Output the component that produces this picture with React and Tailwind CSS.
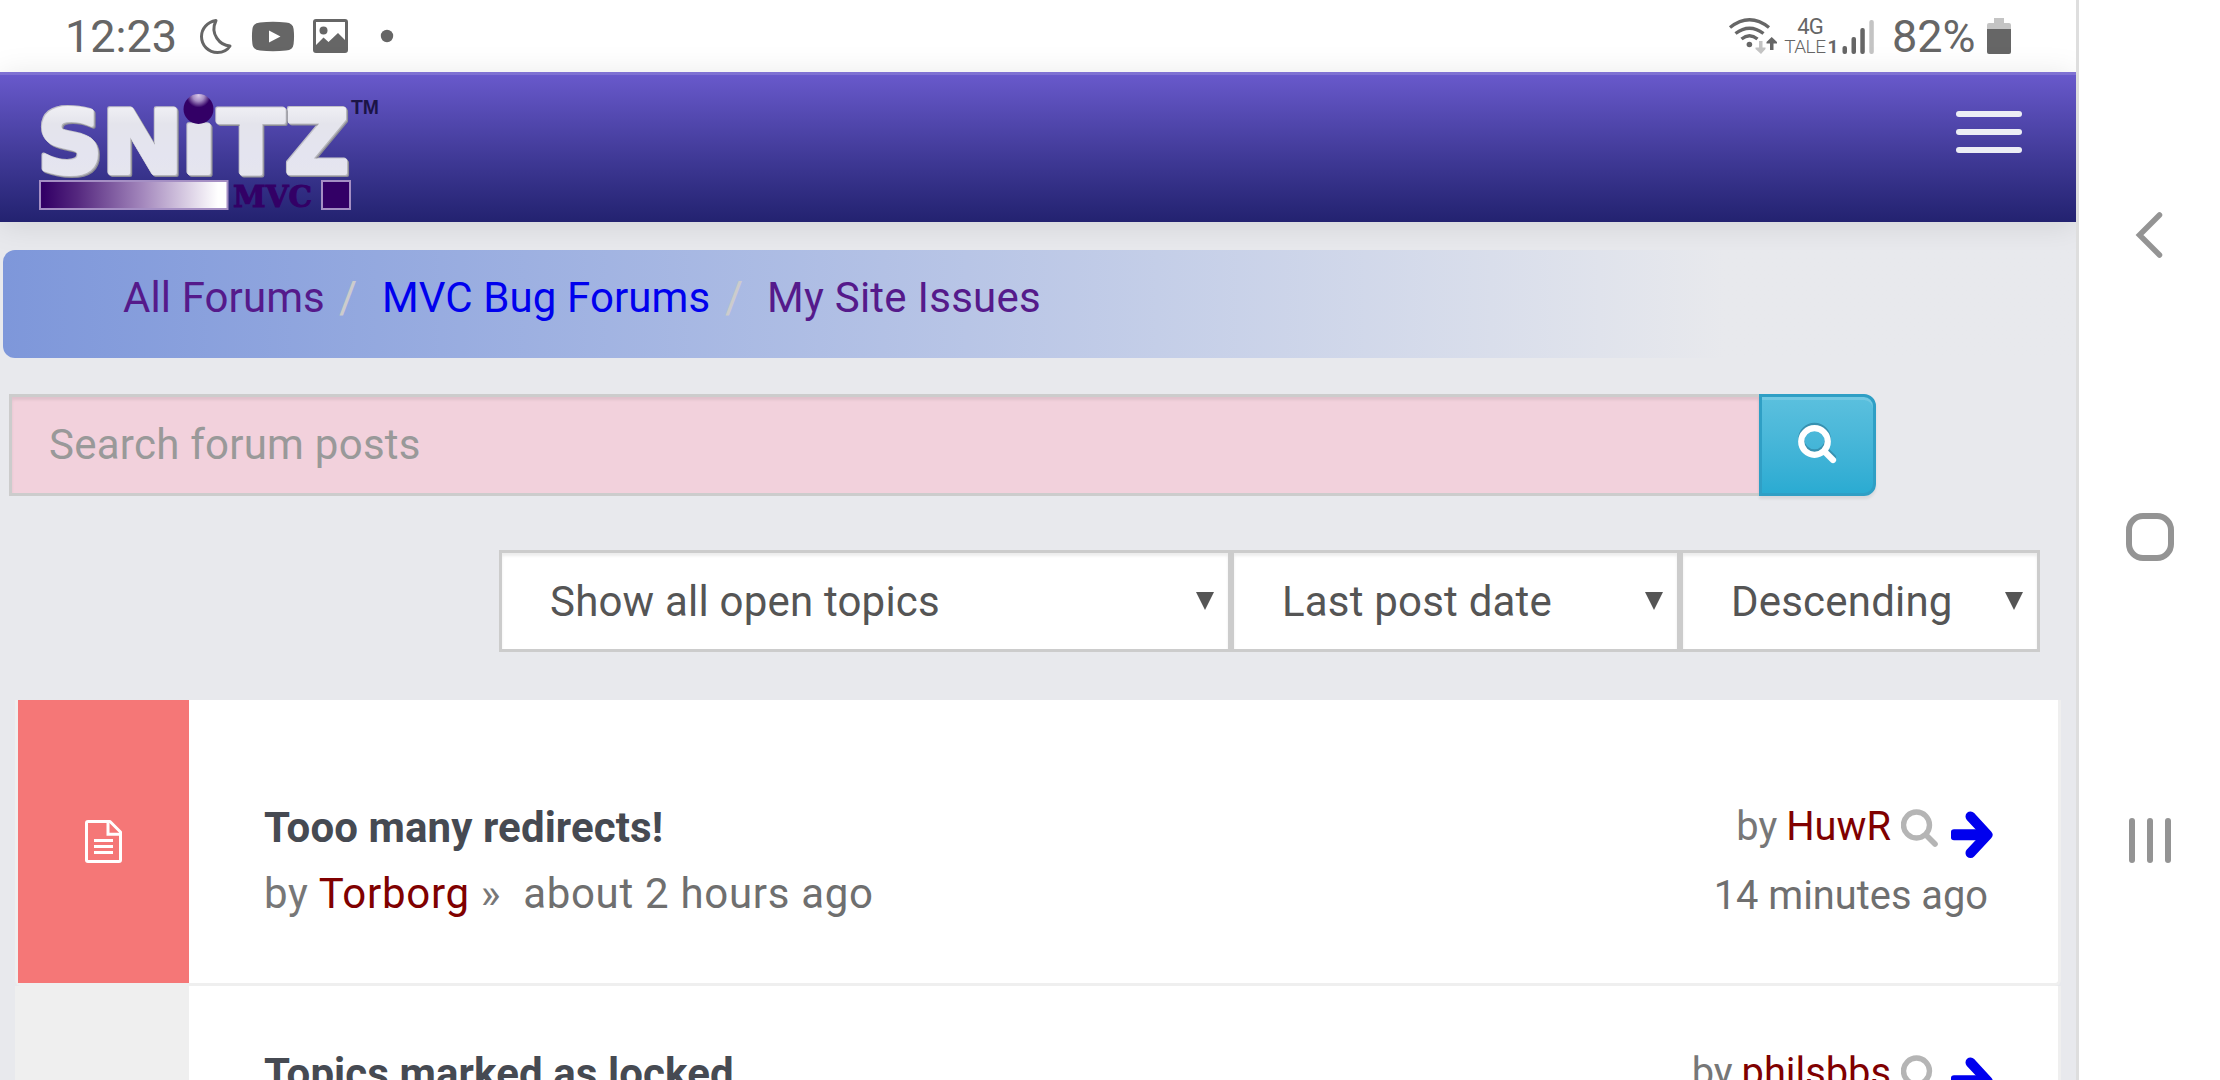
import React from "react";

function LogoLetter({ ch, x, width }) {
  return (
    <text
      x={x}
      y="173"
      fontSize="88"
      textLength={width}
      lengthAdjust="spacingAndGlyphs"
      fill="url(#silver)"
      stroke="url(#silver)"
      strokeWidth="4"
      strokeLinejoin="round"
      style={{ fontFamily: '"DejaVu Sans", Verdana, sans-serif', fontWeight: 700 }}
    >
      {ch}
    </text>
  );
}

function Logo() {
  return (
    <svg width="350" height="126" viewBox="36 90 350 126" className="block shrink-0" role="img" aria-label="Snitz MVC">
      <defs>
        <linearGradient id="silver" gradientUnits="userSpaceOnUse" x1="0" y1="106" x2="0" y2="178">
          <stop offset="0" stopColor="#f0f0f5" />
          <stop offset="0.25" stopColor="#e4e4ec" />
          <stop offset="0.7" stopColor="#e4e4f0" />
          <stop offset="1" stopColor="#e6e6ee" />
        </linearGradient>
        <linearGradient id="bar" x1="0" y1="0" x2="1" y2="0">
          <stop offset="0.02" stopColor="#330066" />
          <stop offset="0.2" stopColor="#55287f" />
          <stop offset="0.55" stopColor="#a488bd" />
          <stop offset="0.95" stopColor="#ffffff" />
        </linearGradient>
        <radialGradient id="ball" cx="0.5" cy="0.05" r="0.95">
          <stop offset="0" stopColor="#d8c8e8" />
          <stop offset="0.2" stopColor="#a58cc4" />
          <stop offset="0.42" stopColor="#330066" />
          <stop offset="1" stopColor="#330066" />
        </radialGradient>
      </defs>
      <g className="[filter:drop-shadow(1px_1px_0.5px_#b4b4ba)_drop-shadow(1px_1.5px_0.5px_#8c8c94)_drop-shadow(-1px_-0.5px_0.5px_#c0c0c8)]">
        <LogoLetter ch="S" x={37.5} width={65} />
        <LogoLetter ch="N" x={101.5} width={82} />
        <LogoLetter ch="ı" x={181} width={36} />
        <LogoLetter ch="T" x={218} width={66} />
        <LogoLetter ch="Z" x={285} width={64} />
      </g>
      <circle cx="198.500" cy="109" r="15" fill="url(#ball)" />
      <text x="351" y="114" fontSize="20" textLength="28" lengthAdjust="spacingAndGlyphs" fill="#1b1446" style={{ fontFamily: '"Liberation Sans", sans-serif', fontWeight: 700 }}>TM</text>
      <rect x="40" y="181" width="187.500" height="28" fill="url(#bar)" stroke="#a58fc4" strokeWidth="2" />
      <text x="233" y="207" fontSize="29" textLength="79" lengthAdjust="spacingAndGlyphs" fill="#330066" stroke="#330066" strokeWidth="1" style={{ fontFamily: '"DejaVu Serif", serif', fontWeight: 700 }}>MVC</text>
      <rect x="322" y="181" width="28" height="28" fill="#330066" stroke="#a58fc4" strokeWidth="2" />
    </svg>
  );
}

function StatusBar() {
  return (
    <div className="flex h-[72px] shrink-0 items-start justify-between bg-white pl-[65px] pr-[65px] text-[#666666]">
      <div className="flex items-start">
        <span className="mt-[2px] w-[132px] whitespace-nowrap text-[45px] leading-[70px]">12:23</span>
        <svg width="210" height="72" viewBox="197 0 210 72" className="block" aria-hidden="true">
          <path d="M216 20.500C207 22 201.500 29 201.500 36.500C201.500 45.500 208.500 52.500 217.500 52.500C223.500 52.500 227.500 50 230 46C220 45.500 209.500 34 216 20.500Z" fill="none" stroke="#666" strokeWidth="3" strokeLinejoin="round" />
          <path d="M260 22.500Q273 21 286 22.500Q293 23 293.600 29Q294.500 36.500 293.600 44Q293 50 286 50.500Q273 52 260 50.500Q253 50 252.400 44Q251.500 36.500 252.400 29Q253 23 260 22.500ZM269 30.500V42.500L280.500 36.500Z" fill="#666" fillRule="evenodd" />
          <path d="M316 19H345Q348 19 348 22V50Q348 53 345 53H316Q313 53 313 50V22Q313 19 316 19ZM316 22V45L323.500 37.500L328.500 42L338 33L345 40V22Z" fill="#666" fillRule="evenodd" />
          <circle cx="323.500" cy="30.500" r="4" fill="#666" />
          <circle cx="387" cy="36" r="6.200" fill="#666" />
        </svg>
      </div>
      <div className="flex items-start">
        <svg width="56" height="72" viewBox="1726 0 56 72" className="block" aria-hidden="true">
          <g fill="none" stroke="#666" strokeWidth="3.400">
            <path d="M1730 27.500Q1749.500 12 1769 27.500" />
            <path d="M1735.500 33.500Q1749.500 23 1763.500 33.500" />
            <path d="M1741.500 39Q1749.500 32.500 1757.500 39" />
          </g>
          <circle cx="1749.400" cy="44.500" r="2.800" fill="#666" />
          <path d="M1759 41H1762.500V47.500H1765.500V49L1761 54L1755.500 49V47.500H1759Z" fill="#c4c4c4" />
          <path d="M1770 50H1773.500V43.500H1777V42L1771.700 37L1766.500 42V43.500H1770Z" fill="#666" />
        </svg>
        <div className="flex w-[58px] flex-col items-center pt-[16px]">
          <span className="-ml-[2px] text-[22px] leading-[21px] tracking-[-0.8px]">4G</span>
          <span className="flex whitespace-nowrap text-[19px] leading-[20px] tracking-[-0.5px] font-light">TALE<b className="ml-[2px] font-bold">1</b></span>
        </div>
        <svg width="46" height="72" viewBox="1840 0 46 72" className="block" aria-hidden="true">
          <rect x="1842.500" y="46" width="4.500" height="8" rx="2" fill="#666" />
          <rect x="1851.500" y="37" width="4.500" height="17" rx="2" fill="#666" />
          <rect x="1860.300" y="28" width="4.500" height="26" rx="2" fill="#666" />
          <rect x="1869.300" y="20" width="4.500" height="34" rx="2" fill="#c4c4c4" />
        </svg>
        <span className="mt-[2px] w-[101px] whitespace-nowrap pl-[6px] text-[45px] leading-[70px]">82%</span>
        <svg width="24" height="72" viewBox="1987 0 24 72" className="block" aria-hidden="true">
          <path d="M1994 18H2004V23H2009Q2011 23 2011 25V30H1987V25Q1987 23 1989 23H1994Z" fill="#c4c4c4" />
          <path d="M1987 29H2011V52Q2011 54 2009 54H1989Q1987 54 1987 52Z" fill="#666" />
        </svg>
      </div>
    </div>
  );
}

function Navbar() {
  return (
    <header className="flex h-[150px] shrink-0 items-start justify-between bg-linear-to-b from-[#6a5acd] to-[#232270] pl-[36px] pr-[54px] pt-[18px] shadow-[0_3px_30px_rgba(0,0,0,0.1),inset_0_3px_0_rgba(255,255,255,0.15)]">
      <Logo />
      <button aria-label="Menu" className="mt-[21px] flex w-[66px] flex-col gap-[12px]">
        <span className="h-[6px] rounded-[3px] bg-[#eceef5]" />
        <span className="h-[6px] rounded-[3px] bg-[#eceef5]" />
        <span className="h-[6px] rounded-[3px] bg-[#eceef5]" />
      </button>
    </header>
  );
}

function Breadcrumb() {
  return (
    <nav className="ml-[3px] mt-[28px] flex h-[108px] shrink-0 rounded-[12px] bg-linear-to-r from-[#7e97da] to-[#e8e9ed] to-[83%] pl-[120px] pt-[18px] text-[42px] leading-[60px] tracking-[0.1px] whitespace-pre">
      <a className="w-[216px] text-[#551a8b]">All Forums</a>
      <span className="w-[43px] text-[44px] text-[#cccccc]">/</span>
      <a className="w-[343px] text-[#0000ee]">MVC Bug Forums</a>
      <span className="w-[42px] text-[44px] text-[#cccccc]">/</span>
      <a className="tracking-[0.25px] text-[#551a8b]">My Site Issues</a>
    </nav>
  );
}

function SearchBar() {
  return (
    <div className="ml-[9px] mt-[36px] flex h-[102px] w-[1867px] shrink-0">
      <div className="flex flex-1 items-center border-[3px] border-r-0 border-[#cccccc] bg-[#f2d1dc] pl-[37px] text-[42px] leading-[60px] tracking-[0.25px] text-[#999999] shadow-[inset_0_3px_3px_rgba(0,0,0,0.075)]">
        Search forum posts
      </div>
      <button aria-label="Search" className="flex w-[117px] items-center justify-center rounded-r-[12px] border-[3px] border-[#2f9fc5] bg-linear-to-b from-[#5bc0de] to-[#2aabd2] shadow-[inset_0_3px_0_rgba(255,255,255,0.15),0_3px_3px_rgba(0,0,0,0.075)]">
        <svg width="40" height="46" viewBox="0 0 40 46" className="-ml-[2px]" aria-hidden="true">
          <g fill="none" stroke="#3791b0" strokeWidth="6" strokeLinecap="round">
            <circle cx="17.500" cy="17" r="13.300" />
            <path d="M28 27L36 35" />
          </g>
          <g fill="none" stroke="#fff" strokeWidth="6.200" strokeLinecap="round">
            <circle cx="17.500" cy="19.500" r="13.300" />
            <path d="M28 30L36 38" />
          </g>
        </svg>
      </button>
    </div>
  );
}

function Select({ label, className }) {
  return (
    <div className={"flex h-[102px] items-center justify-between border-[3px] border-[#cccccc] bg-white pl-[48px] pr-[14px] text-[42px] leading-[60px] tracking-[0.2px] text-[#555555] shadow-[inset_0_3px_3px_rgba(0,0,0,0.075)] " + className}>
      <span className="whitespace-nowrap pt-px">{label}</span>
      <svg width="18" height="18" viewBox="0 0 18 18" aria-hidden="true">
        <path d="M0 0H18L9 18Z" fill="#555" />
      </svg>
    </div>
  );
}

function Topic({ title, author, age, lastBy, lastAge, unread }) {
  return (
    <article className={"flex h-[286px] shrink-0 border-x-[3px] border-b-[3px] border-[#efefef] bg-white" + (unread ? " rounded-b-[6px]" : "")}>
      <div className={"flex w-[171px] shrink-0 items-center justify-center " + (unread ? "bg-[#f57777]" : "bg-[#efefef]")}>
        {unread && (
          <svg width="37" height="43" viewBox="0 0 37 43" fill="none" stroke="#fff" strokeWidth="3" aria-hidden="true">
            <path d="M25 1.500H3Q1.500 1.500 1.500 3V40Q1.500 41.500 3 41.500H34Q35.500 41.500 35.500 40V12Z" strokeLinejoin="round" />
            <path d="M23 2V14.200H35M9 20.500H28M9 26.500H28M9 32.500H28" />
          </svg>
        )}
      </div>
      <div className={"flex-1 pl-[75px] text-[42px] leading-[66px] whitespace-nowrap " + (unread ? "pt-[95px]" : "pt-[55px]")}>
        <h3 className="font-bold tracking-[0.1px] text-[#464a52]">{title}</h3>
        {author && (
          <p className="flex tracking-[0.7px] text-[#6f6f6f]">
            <span className="mr-[10px] text-[#777777]">by</span>
            <span className="mr-[11px] text-[#800000]">{author}</span>
            <span className="mr-[22px] text-[#777777]">»</span>
            {age}
          </p>
        )}
      </div>
      <div className={"flex flex-col items-end pr-[65px] text-[39.800px] leading-[69px] whitespace-nowrap text-[#6f6f6f] " + (unread ? "pt-[92px]" : "pt-[52px]")}>
        <div className="flex items-start">
          <span className="mr-[9px] text-[#777777]">by</span>
          <span className="mr-[10px] text-[#800000]">{lastBy}</span>
          <svg width="37" height="40" viewBox="0 0 37 40" fill="none" stroke="#b5b5b5" strokeLinecap="round" className="mt-[17px] mr-[13px]" aria-hidden="true">
            <circle cx="15.500" cy="16" r="13" strokeWidth="5.400" />
            <path d="M26 27L34 35" strokeWidth="5.600" />
          </svg>
          <svg width="42" height="48" viewBox="0 0 42 48" className="mt-[19px]" aria-hidden="true">
            <path d="M19.500 5.500L36.500 23.800L19.500 42" fill="none" stroke="#0000ee" strokeWidth="10" strokeLinecap="round" strokeLinejoin="round" />
            <path d="M3 18.300H32V29.300H3Q0 29.300 0 26.500V21.100Q0 18.300 3 18.300Z" fill="#0000ee" />
          </svg>
        </div>
        {lastAge && <div className="pr-[5px]">{lastAge}</div>}
      </div>
    </article>
  );
}

function SystemNav() {
  return (
    <aside className="flex w-[144px] shrink-0 flex-col items-center border-l-[3px] border-[#dedede] bg-white pt-[211px]">
      <svg width="48" height="48" viewBox="0 0 48 48" fill="none" stroke="#949494" strokeWidth="5.500" strokeLinecap="round" aria-hidden="true">
        <path d="M33.500 4L13.500 24L33.500 44" />
      </svg>
      <svg width="48" height="48" viewBox="0 0 48 48" className="mt-[254px]" aria-hidden="true">
        <rect x="3" y="3" width="42" height="42" rx="14" fill="none" stroke="#949494" strokeWidth="6" />
      </svg>
      <svg width="42" height="45" viewBox="0 0 42 45" className="mt-[257px]" fill="#949494" aria-hidden="true">
        <rect x="0" y="0" width="6" height="45" rx="3" />
        <rect x="18" y="0" width="6" height="45" rx="3" />
        <rect x="36" y="0" width="6" height="45" rx="3" />
      </svg>
    </aside>
  );
}

export default function App() {
  return (
    <div className="flex h-[1080px] w-[2220px] overflow-hidden bg-[#e8e9ed] font-['Roboto',sans-serif]">
      <main className="flex w-[2076px] shrink-0 flex-col overflow-hidden">
        <StatusBar />
        <Navbar />
        <Breadcrumb />
        <SearchBar />
        <div className="mt-[54px] mr-[36px] flex shrink-0 justify-end">
          <Select label="Show all open topics" className="w-[732px]" />
          <Select label="Last post date" className="w-[449px]" />
          <Select label="Descending" className="w-[360px]" />
        </div>
        <section className="ml-[15px] mr-[15px] mt-[48px] flex shrink-0 flex-col">
          <Topic title="Tooo many redirects!" author="Torborg" age="about 2 hours ago" lastBy="HuwR" lastAge="14 minutes ago" unread />
          <Topic title="Topics marked as locked" lastBy="philsbbs" />
        </section>
      </main>
      <SystemNav />
    </div>
  );
}
